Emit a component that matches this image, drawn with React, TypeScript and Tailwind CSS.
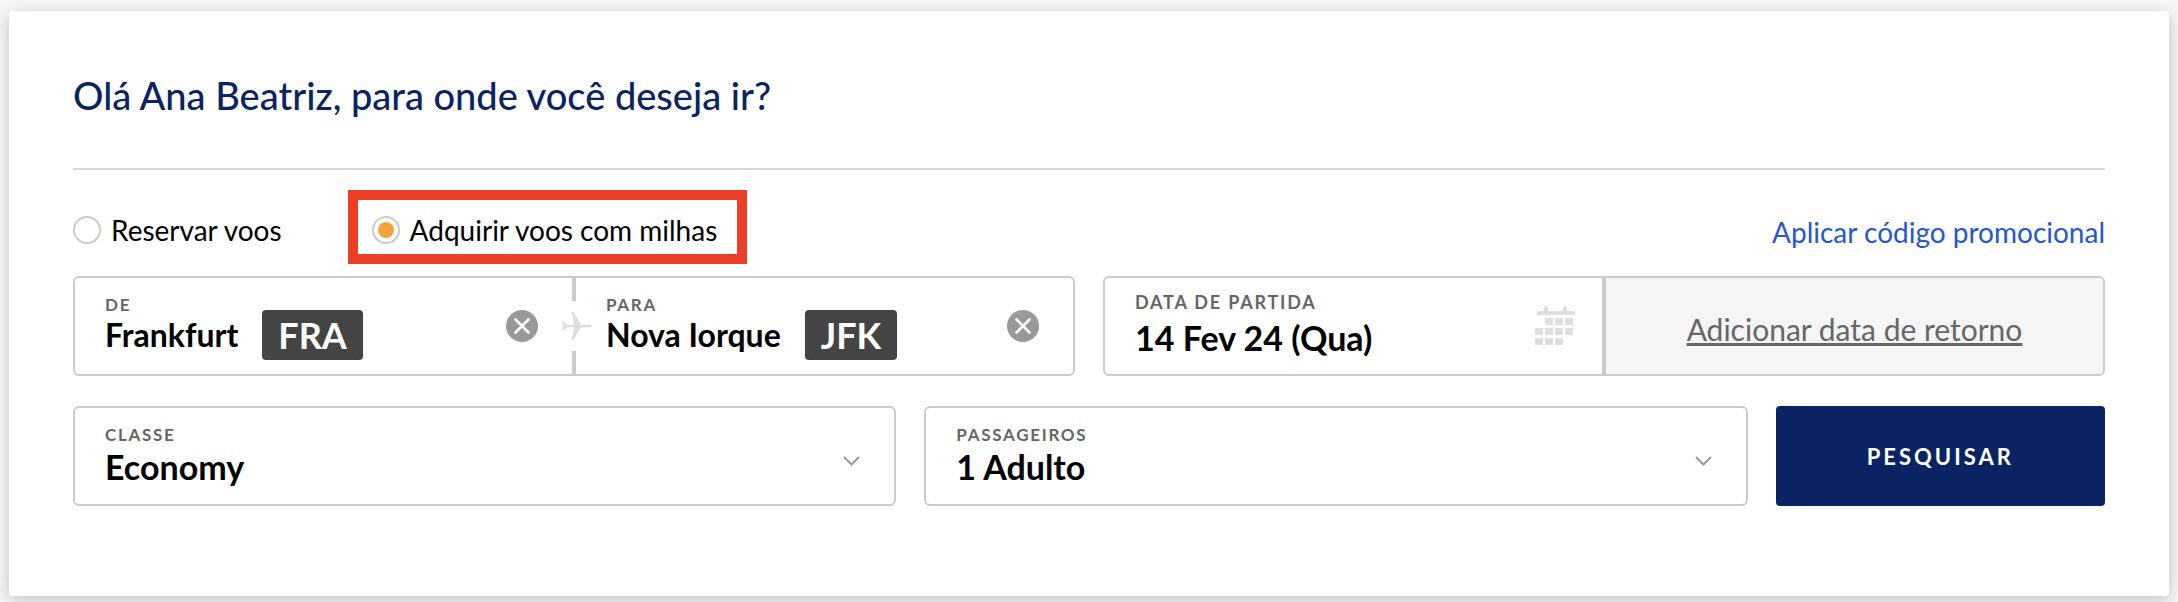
import type { ReactNode } from "react";

const fieldBox = "min-h-[100px] rounded-md border-2 border-[#cbcbcb] bg-white";
const labelText = "block leading-5 font-bold tracking-widest text-[#666] uppercase";

function PlaneIcon() {
  return (
    <svg viewBox="-6 0 36 30" className="h-[30px] w-9" fill="#dedede" aria-hidden="true">
      <path d="M0 10.5h1.5l3.5 3.2h7.2L9.6 1h1.9l7.3 12.7H26c2.2 0 4 .6 4 1.3s-1.8 1.3-4 1.3h-7.2L11.5 29H9.6l2.6-12.7H5l-3.5 3.2H0L1.2 15z" />
    </svg>
  );
}

function CalendarIcon() {
  const cells = [
    [11, 12], [21, 12], [31, 12],
    [1, 22], [11, 22], [21, 22], [31, 22],
    [1, 32], [11, 32], [21, 32],
  ];
  return (
    <svg viewBox="0 0 41 40" className="h-10 w-[41px] shrink-0" fill="#dedede" aria-hidden="true">
      <path d="M3 9V7a2 2 0 0 1 2-2h5V2a2 2 0 0 1 4 0v3h15V2a2 2 0 0 1 4 0v3h6a2 2 0 0 1 2 2v2z" />
      {cells.map(([x, y]) => (
        <rect key={`${x}-${y}`} x={x} y={y} width="8" height="7" rx="0.5" />
      ))}
    </svg>
  );
}

function RadioOption({
  id,
  label,
  checked,
  className,
}: {
  id: string;
  label: string;
  checked?: boolean;
  className: string;
}) {
  return (
    <label htmlFor={id} className={`flex items-center gap-[10px] border-10 pt-4 pb-[10px] ${className}`}>
      <input
        id={id}
        type="radio"
        name="booking"
        defaultChecked={checked}
        className="h-7 w-7 shrink-0 appearance-none rounded-full border-2 border-[#cbcbcb] bg-white bg-clip-content p-1 checked:bg-[#f2a33a]"
      />
      <span className="text-[28px] leading-7 text-black">{label}</span>
    </label>
  );
}

function AirportField({ id, label, city, code }: { id: string; label: string; city: string; code: string }) {
  return (
    <div className="flex flex-1 items-start pr-[34px] pl-[30px]">
      <div className="pt-[17px]">
        <label htmlFor={id} className={`text-[17px] ${labelText}`}>
          {label}
        </label>
        <input
          id={id}
          type="text"
          defaultValue={city}
          className="block h-10 field-sizing-content text-[32px] leading-10 font-bold text-black outline-none"
        />
      </div>
      <span className="mt-8 ml-6 rounded bg-[#444] px-4 text-[36px] leading-[50px] font-bold text-white">
        {code}
      </span>
      <button type="button" aria-label={`Limpar ${label}`} className="mt-8 ml-auto shrink-0">
        <svg viewBox="0 0 32 32" className="h-8 w-8">
          <circle cx="16" cy="16" r="16" fill="#999" />
          <path d="M9.5 9.5l13 13m0-13l-13 13" stroke="#fff" strokeWidth="2.6" strokeLinecap="round" />
        </svg>
      </button>
    </div>
  );
}

function SelectField({ id, label, children }: { id: string; label: string; children: ReactNode }) {
  return (
    <div className={`relative ${fieldBox} pt-[17px]`}>
      <label htmlFor={id} className={`text-[17px] ${labelText} px-[30px]`}>
        {label}
      </label>
      <select
        id={id}
        className="mt-[2px] block h-10 w-full appearance-none px-[30px] text-[34px] leading-10 font-bold text-black outline-none"
      >
        {children}
      </select>
      <svg
        viewBox="0 0 17 10"
        className="pointer-events-none absolute top-12 right-[34px] h-[10px] w-[17px]"
        fill="none"
        stroke="#999"
        strokeWidth="2"
        aria-hidden="true"
      >
        <path d="M1 1l7.5 7.5L16 1" />
      </svg>
    </div>
  );
}

export default function App() {
  return (
    <div className="flex min-h-screen flex-col bg-[#f7f7f7] px-[9px] pt-[11px] pb-[6px] font-[Lato,'Open_Sans',sans-serif]">
      <form className="flex-1 rounded-sm bg-white px-16 pt-[60px] shadow-[0_4px_18px_rgba(0,0,0,0.22)]">
        <h1 className="border-b-2 border-[#d9d9d9] pb-[49px] text-[38px] leading-[48px] font-medium text-[#0a2463]">
          Olá Ana Beatriz, para onde você deseja ir?
        </h1>

        <div className="mt-5 mb-3 flex items-end justify-between">
          <div className="flex gap-14">
            <RadioOption id="book" label="Reservar voos" className="-ml-[10px] border-transparent" />
            <RadioOption id="miles" label="Adquirir voos com milhas" checked className="border-[#eb4026] pr-5 pl-[14px]" />
          </div>
          <a href="#promo" className="mb-4 text-[28px] leading-8 text-[#2457d6]">
            Aplicar código promocional
          </a>
        </div>

        <div className="grid grid-cols-2 gap-7">
          <div className={`flex ${fieldBox}`}>
            <AirportField id="from" label="De" city="Frankfurt" code="FRA" />
            <div className="-mx-4 flex w-9 flex-col items-center justify-between" aria-hidden="true">
              <span className="h-[23px] w-1 bg-[#cbcbcb]" />
              <PlaneIcon />
              <span className="h-[23px] w-1 bg-[#cbcbcb]" />
            </div>
            <AirportField id="to" label="Para" city="Nova Iorque" code="JFK" />
          </div>

          <div className={`grid grid-cols-[1fr_4px_1fr] overflow-hidden ${fieldBox}`}>
            <div className="flex items-center pr-[27px] pl-[30px]">
              <div className="min-w-0 flex-1 self-start pt-[14px]">
                <label htmlFor="departure" className={`text-[18px] ${labelText}`}>
                  Data de partida
                </label>
                <input
                  id="departure"
                  type="text"
                  defaultValue="14 Fev 24 (Qua)"
                  className="mt-[6px] block h-10 w-full text-[34px] leading-10 font-bold text-black outline-none"
                />
              </div>
              <CalendarIcon />
            </div>
            <span className="bg-[#cbcbcb]" />
            <button type="button" className="bg-[#f5f5f5] pt-[6px] text-[30px] text-[#666] underline">
              Adicionar data de retorno
            </button>
          </div>
        </div>

        <div className="mt-[30px] mb-[90px] grid grid-cols-[5fr_5fr_2fr] gap-7">
          <SelectField id="cabin" label="Classe">
            <option>Economy</option>
          </SelectField>
          <SelectField id="passengers" label="Passageiros">
            <option>1 Adulto</option>
          </SelectField>
          <button
            type="submit"
            className="rounded bg-[#0a2463] text-[22px] font-bold tracking-[3px] text-white"
          >
            PESQUISAR
          </button>
        </div>
      </form>
    </div>
  );
}
